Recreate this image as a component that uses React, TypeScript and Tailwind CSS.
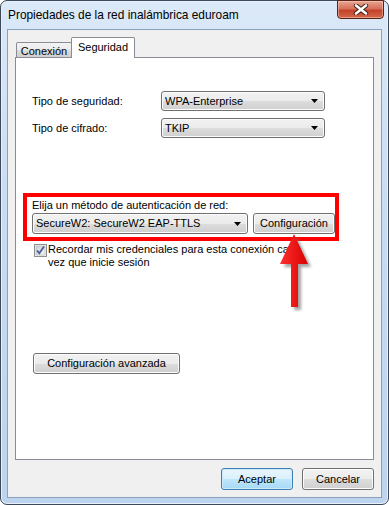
import React from "react";

const btnGray =
  "border border-[#707070] rounded-[3px] bg-[linear-gradient(to_bottom,#f2f2f2_0%,#ebebeb_50%,#dddddd_51%,#cfcfcf_100%)] shadow-[inset_0_0_0_1px_#fcfcfc]";

function Combo({ w, h, text }: { w: string; h: string; text: string }) {
  return (
    <div className={`${w} ${h} ${btnGray} flex items-center justify-between pl-[3px] pr-[6px]`}>
      <span className="leading-none">{text}</span>
      <svg width="7" height="4" viewBox="0 0 7 4">
        <polygon points="0,0 7,0 3.5,4" fill="#000" />
      </svg>
    </div>
  );
}

export default function App() {
  return (
    <div
      className="w-[389px] h-[505px] bg-white text-[11px] text-black"
      style={{ fontFamily: '"Liberation Sans", Arial, sans-serif' }}
    >
      <div className="relative w-full h-full rounded-[7px] border border-[#3d4858] bg-[linear-gradient(to_bottom,#dbe9f8_0%,#c8dcf2_40%,#bdd4ee_100%)] flex flex-col shadow-[inset_0_0_0_1px_#e8f1fb]">
        {/* title bar */}
        <div className="h-[28px] flex items-start justify-between pl-[7px] pr-[4px]">
          <span className="mt-[8px] text-[11.9px] leading-[13px]">Propiedades de la red inalámbrica eduroam</span>
          <div className="w-[47px] h-[19px] -mt-[1px] rounded-b-[4px] border border-[#5a2318] bg-[linear-gradient(to_bottom,#e8a593_0%,#d6705a_45%,#c44229_55%,#d4684c_100%)] shadow-[inset_0_0_0_1px_rgba(255,220,210,0.45)] flex items-center justify-center">
            <svg width="16" height="11" viewBox="0 0 16 11">
              <path d="M3 1.5 L13 9.5 M13 1.5 L3 9.5" stroke="#3a1a14" strokeWidth="4.4" strokeLinecap="round" />
              <path d="M3 1.5 L13 9.5 M13 1.5 L3 9.5" stroke="#ffffff" strokeWidth="2.6" strokeLinecap="round" />
            </svg>
          </div>
        </div>

        {/* client */}
        <div className="mx-[6px] mb-[6px] flex-1 border border-[#8aa0bb] bg-[#f0f0f0] flex flex-col px-[7px] pt-[7px]">
          {/* tabs */}
          <div className="h-[20px] flex items-end">
            <div className="ml-[1px] w-[56px] h-[15px] border border-b-0 border-[#898c95] rounded-t-[2px] bg-[linear-gradient(to_bottom,#f3f3f3_0%,#ebebeb_50%,#dddddd_51%,#cfcfcf_100%)] flex items-center justify-center">
              <span className="leading-none mt-[2px]">Conexión</span>
            </div>
            <div className="relative z-10 -ml-[1px] -mb-[1px] w-[64px] h-[21px] border border-b-0 border-[#898c95] rounded-t-[2px] bg-white flex items-start justify-center">
              <span className="leading-none mt-[4px]">Seguridad</span>
            </div>
          </div>

          {/* pane */}
          <div className="h-[403px] border border-[#898c95] bg-white flex flex-col">
            <div className="mt-[33px] flex items-center pl-[16px]">
              <span className="w-[129px]">Tipo de seguridad:</span>
              <Combo w="w-[164px]" h="h-[20px]" text="WPA-Enterprise" />
            </div>
            <div className="mt-[7px] flex items-center pl-[16px]">
              <span className="w-[129px]">Tipo de cifrado:</span>
              <Combo w="w-[164px]" h="h-[20px]" text="TKIP" />
            </div>

            {/* red annotated box */}
            <div className="mt-[55px] ml-[7px] w-[316px] h-[48px] border-[4px] border-[#ff0000] flex flex-col pt-[2px] pl-[5px]">
              <span className="h-[13px] leading-[13px]">Elija un método de autenticación de red:</span>
              <div className="mt-[1px] flex items-center gap-[5px]">
                <Combo w="w-[216px]" h="h-[21px]" text="SecureW2: SecureW2 EAP-TTLS" />
                <div className={`w-[82px] h-[21px] ${btnGray} flex items-center justify-center`}>
                  <span className="leading-none">Configuración</span>
                </div>
              </div>
            </div>

            {/* checkbox */}
            <div className="mt-[2px] ml-[18px] h-[26px] flex items-start">
              <svg width="13" height="13" viewBox="0 0 13 13" className="mt-[1px] shrink-0">
                <defs>
                  <linearGradient id="cbg" x1="0" y1="0" x2="1" y2="1">
                    <stop offset="0" stopColor="#cbcfd5" />
                    <stop offset="1" stopColor="#f6f6f6" />
                  </linearGradient>
                </defs>
                <rect x="0.5" y="0.5" width="12" height="12" fill="#f4f4f4" stroke="#8e8f8f" />
                <rect x="2" y="2" width="9" height="9" fill="url(#cbg)" stroke="#aeb3b9" strokeWidth="0.6" />
                <path d="M3 6.5 L5.3 9.3 L10 2.5" stroke="#4a5f97" strokeWidth="1.8" fill="none" />
              </svg>
              <span className="ml-[1px] leading-[12.5px]">
                Recordar mis credenciales para esta conexión cada
                <br />
                vez que inicie sesión
              </span>
            </div>

            <div className={`mt-[84px] ml-[17px] w-[147px] h-[21px] ${btnGray} flex items-center justify-center`}>
              <span className="leading-none">Configuración avanzada</span>
            </div>
          </div>

          {/* bottom buttons */}
          <div className="mt-[8px] flex justify-end gap-[9px]">
            <div className="w-[72px] h-[22px] border border-[#3c7fb1] rounded-[3px] bg-[linear-gradient(to_bottom,#eaf6fd_0%,#d9f0fc_50%,#bee6fd_51%,#a7d9f5_100%)] shadow-[inset_0_0_0_1px_#cdeafb] flex items-center justify-center">
              <span className="leading-none">Aceptar</span>
            </div>
            <div className={`w-[72px] h-[22px] ${btnGray} flex items-center justify-center`}>
              <span className="leading-none">Cancelar</span>
            </div>
          </div>
        </div>

        {/* arrow annotation */}
        <svg className="absolute left-[269px] top-[227px]" width="46" height="86" viewBox="0 0 46 86">
          <defs>
            <filter id="sh" x="-50%" y="-50%" width="200%" height="200%">
              <feGaussianBlur stdDeviation="1.5" />
            </filter>
            <linearGradient id="rg" x1="0" y1="0" x2="1" y2="0">
              <stop offset="0" stopColor="#ff3030" />
              <stop offset="1" stopColor="#d80000" />
            </linearGradient>
          </defs>
          <polygon
            points="27,9 41,39 31,39 31,82 24,82 24,39 14,39"
            fill="#7a7a7a"
            opacity="0.7"
            filter="url(#sh)"
          />
          <polygon points="24,6 38,36 28,36 28,79 21,79 21,36 10,36" fill="url(#rg)" />
        </svg>
      </div>
    </div>
  );
}
